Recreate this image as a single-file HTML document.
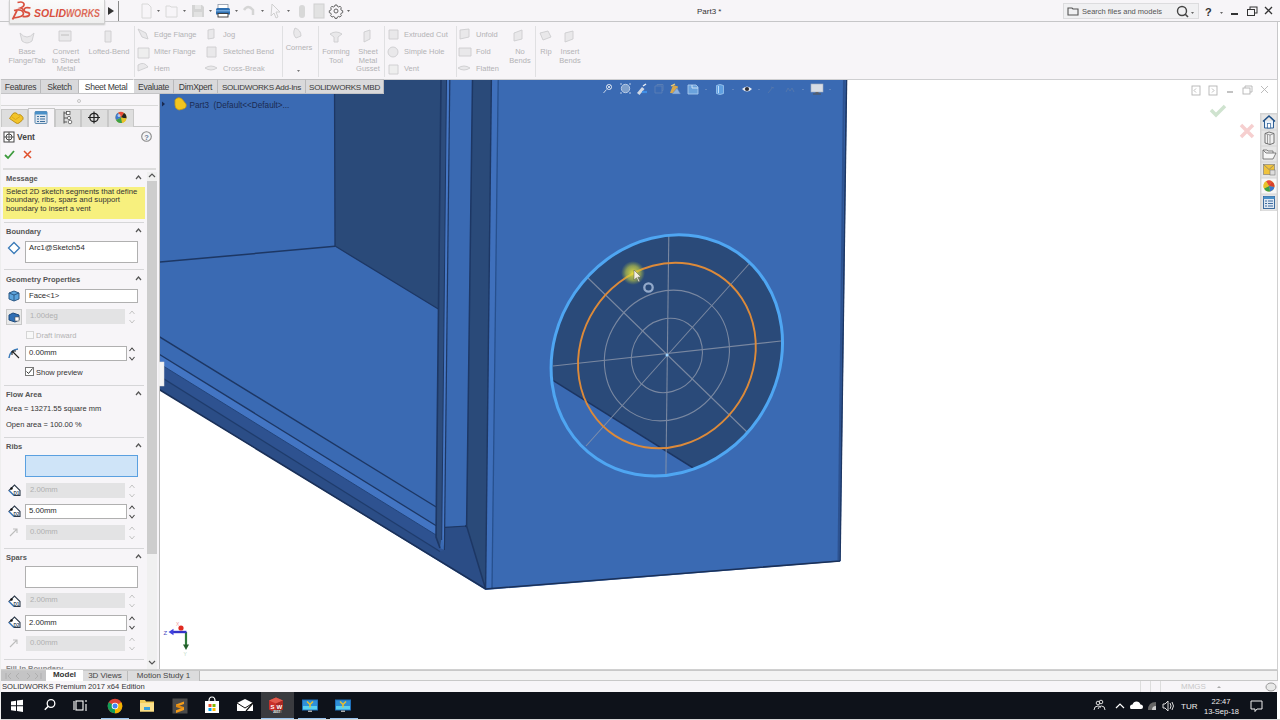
<!DOCTYPE html>
<html><head><meta charset="utf-8">
<style>
*{box-sizing:border-box;margin:0;padding:0}
html,body{width:1280px;height:720px;overflow:hidden;background:#fff;font-family:"Liberation Sans",sans-serif;color:#222}
.a{position:absolute}
#title{left:0;top:0;width:1280px;height:22px;background:#f7f5f8;border-bottom:1px solid #c6c6c8}
#ribbon{left:0;top:22px;width:1278px;height:58px;background:#f7f5f8;border-bottom:1px solid #cfcfd1;border-right:1px solid #c8c8ca}
.rt{position:absolute;font-size:7.5px;color:#b9b9bb;white-space:nowrap;line-height:8.5px;text-align:center}
.rl{position:absolute;font-size:7.5px;color:#b9b9bb;white-space:nowrap;line-height:9px}
.sep{position:absolute;top:26px;width:1px;height:50px;background:#e2e2e4}
#tabs{left:1px;top:79px;width:383px;height:15px;background:#d6d6d8;border-bottom:1px solid #c4c4c6}
.tab{position:absolute;top:0;height:14px;font-size:8.6px;line-height:15px;text-align:center;color:#3a3a3a;letter-spacing:-0.3px;border-right:1px solid #b9b9bb;border-top:1px solid #c0c0c2;background:#d9d9db}
#panel{left:0;top:94px;width:160px;height:576px;background:#f7f5f8;border-right:1px solid #bdbdbd}
.ph{position:absolute;left:6px;font-size:7.5px;color:#555;font-weight:bold;}
.pt{position:absolute;font-size:7.5px;color:#222;white-space:nowrap}
.box{position:absolute;background:#fff;border:1px solid #b0b0b0;font-size:7.7px;padding-left:3px;line-height:12px;color:#2a2a2a}
.dis{background:#e3e3e4;border-color:#e3e3e4;color:#b0b0b0}
.psep{position:absolute;left:4px;width:140px;height:1px;background:#d6d6d8}
.car{position:absolute;left:135px;width:7px;height:7px}
#gfx{left:160px;top:80px;width:1120px;height:590px;background:#fff}
#btabs{left:0;top:669px;width:1280px;height:12px;background:#fff;border-top:1px solid #d0d0d0}
#status{left:0;top:681px;width:1280px;height:11px;background:#f7f5f8}
#task{left:0;top:692px;width:1277px;height:27px;background:#0e121a}
</style></head><body>

<!-- TITLE BAR -->
<div id="title" class="a"></div>
<div class="a" style="left:9px;top:0;width:96px;height:24px;z-index:5;background:linear-gradient(#fbfbfb,#eeeeee);border:1px solid #d0d0d0;border-top:none;box-shadow:0 1px 1.5px #c4c4c4"></div>
<svg class="a" style="left:0;top:0;z-index:6" width="105" height="22" viewBox="0 0 105 22">
  <path d="M17.5 2.5 q5.5 -1.5 6.5 1.5 q0.5 2.5 -3.5 4 q3 0.5 2.5 3" fill="none" stroke="#d9503f" stroke-width="1.7"/>
  <path d="M12.5 19.5 l5 -10 M14 10.5 q9 -2 9.5 3 q0 3.5 -10 4.5" fill="none" stroke="#d9503f" stroke-width="1.7"/>
  <path d="M30.5 8 q-6 -1.5 -6.5 2 q0 2 3.5 2.5 q3 0.7 1.5 3 q-1.5 1.5 -6.5 0.8" fill="none" stroke="#d9503f" stroke-width="1.8"/>
  <text x="34" y="17.3" font-family="Liberation Sans" font-weight="bold" font-style="italic" font-size="11" fill="#d9503f" textLength="32" lengthAdjust="spacingAndGlyphs">SOLID</text>
  <text x="66" y="17.3" font-family="Liberation Sans" font-weight="bold" font-style="italic" font-size="11" fill="#dd6a58" textLength="34" lengthAdjust="spacingAndGlyphs">WORKS</text>
</svg>
<div class="a" style="left:108px;top:7px;width:0;height:0;border-left:6px solid #333;border-top:4.5px solid transparent;border-bottom:4.5px solid transparent"></div>
<div class="a" style="left:118px;top:1px;width:1px;height:20px;background:#8a8a8a"></div>
<svg class="a" style="left:130px;top:0" width="240" height="22" viewBox="130 0 240 22">
  <g fill="none" stroke="#d8d8d8" stroke-width="1">
    <path d="M142 4 h6 l3 3 v11 h-9z"/>
    <path d="M166 6 h4 l1 1 h6 v10 h-11z"/>
  </g>
  <path d="M192 5h10l2 2v10h-12z" fill="#d4d4d4"/><rect x="195" y="5" width="6" height="4" fill="#e6e6e6"/><rect x="194" y="12" width="8" height="5" fill="#e2e2e2"/>
  <rect x="218" y="4.5" width="10" height="4" fill="#fff" stroke="#8a96a6" stroke-width="0.8"/>
  <path d="M216 9.5 q0 -1.5 1.5 -1.5 h11 q1.5 0 1.5 1.5 v5 h-14z" fill="#2f6fb0"/>
  <rect x="216" y="10" width="14" height="1.5" fill="#6fa6dc"/>
  <rect x="218" y="13.5" width="10" height="3.5" fill="#fff" stroke="#333" stroke-width="0.9"/>
  <path d="M244 10 q4 -6 9 0 v5" fill="none" stroke="#d5d5d5" stroke-width="2.5"/>
  <path d="M272 4 l8 8 h-4 l2 5 l-2 1 l-2 -5 l-3 3z" fill="none" stroke="#d0d0d0"/>
  <rect x="299" y="5" width="6" height="13" rx="3" fill="#d8d8d8"/>
  <rect x="314" y="4" width="10" height="14" fill="#e2e2e2" stroke="#d0d0d0"/>
  <path d="M335 5 h2 l0.4 1.4 l1.3 0.6 l1.3 -0.7 l1.4 1.4 l-0.7 1.3 l0.6 1.3 l1.4 0.4 v2 l-1.4 0.4 l-0.6 1.3 l0.7 1.3 l-1.4 1.4 l-1.3 -0.7 l-1.3 0.6 l-0.4 1.4 h-2 l-0.4 -1.4 l-1.3 -0.6 l-1.3 0.7 l-1.4 -1.4 l0.7 -1.3 l-0.6 -1.3 l-1.4 -0.4 v-2 l1.4 -0.4 l0.6 -1.3 l-0.7 -1.3 l1.4 -1.4 l1.3 0.7 l1.3 -0.6z" fill="none" stroke="#555" stroke-width="0.9"/>
  <circle cx="336" cy="11" r="2" fill="none" stroke="#555" stroke-width="0.9"/>
  <g fill="#666"><path d="M157 10h3l-1.5 2z"/><path d="M183 10h3l-1.5 2z"/><path d="M209 10h3l-1.5 2z"/><path d="M235 10h3l-1.5 2z"/><path d="M261 10h3l-1.5 2z"/><path d="M287 10h3l-1.5 2z"/><path d="M347 10h3l-1.5 2z"/></g>
</svg>
<div class="a" style="left:697px;top:7px;font-size:8px;color:#333">Part3 *</div>
<div class="a" style="left:1063px;top:3px;width:136px;height:16px;background:#f0f0f2;border:1px solid #dcdcde"></div>
<svg class="a" style="left:1066px;top:5px" width="14" height="12"><path d="M2 3 h4 l1 1 h5 v6 h-10z" fill="none" stroke="#555" stroke-width="1.1"/></svg>
<div class="a" style="left:1082px;top:7px;font-size:7.5px;color:#555">Search files and models</div>
<svg class="a" style="left:1172px;top:3px" width="60" height="18">
  <circle cx="10" cy="8" r="4.5" fill="none" stroke="#444" stroke-width="1.4"/><line x1="13" y1="11" x2="16" y2="14" stroke="#444" stroke-width="1.6"/>
  <path d="M19 9h3l-1.5 2z" fill="#666"/>
  <text x="33" y="13" font-family="Liberation Sans" font-weight="bold" font-size="11" fill="#333">?</text>
  <path d="M48 9h3l-1.5 2z" fill="#666"/>
</svg>
<svg class="a" style="left:1228px;top:3px" width="52" height="18">
  <rect x="3" y="10" width="7" height="2" fill="#333"/>
  <rect x="22" y="4" width="7" height="6" fill="none" stroke="#333"/><rect x="19.5" y="6.5" width="7" height="6" fill="#f6f5f7" stroke="#333"/>
  <path d="M37 4 l7 7 M44 4 l-7 7" stroke="#333" stroke-width="1.3"/>
</svg>

<!-- RIBBON -->
<div id="ribbon" class="a"></div>
<svg class="a" style="left:0;top:22px" width="600" height="58" viewBox="0 22 600 58">
  <g fill="#e9e8ea" stroke="#cdcdcf" stroke-width="0.9">
    <path d="M20 33 q7 8 14 0 l-2 8 q-5 4 -10 0z"/>
    <path d="M59 31 h12 v10 h-12z"/><path d="M61 35 h8" stroke="#bbb"/>
    <path d="M105 31 h6 v11 h-6z"/>
    <path d="M138 29 l8 4 l2 6 l-6 -2z"/>
    <path d="M138 48 h11 v10 h-11z" fill="#eee"/>
    <path d="M138 65 q6 -4 10 2 l-10 4z"/>
    <path d="M208 30 l6 -1 v9 l-6 1z"/>
    <path d="M207 47 h9 v10 h-9z"/>
    <path d="M205 68 q6 -4 12 0 q-6 4 -12 0z"/>
    <path d="M295 28 q6 2 6 8 l-5 2 q-4 -4 -1 -10z"/>
    <path d="M330 34 q6 -4 12 0 l-4 3 v5 h-4 v-5z"/>
    <path d="M364 32 l6 -2 v9 l-6 3z"/>
    <path d="M389 30 h9 v9 h-9z"/>
    <circle cx="393" cy="52" r="5"/>
    <path d="M389 65 h9 v9 h-9z" fill="#eee"/>
    <path d="M460 30 l9 -1 v8 l-9 2z"/>
    <path d="M459 48 h12 v8 h-12z"/>
    <path d="M458 68 q6 -4 12 0 q-6 4 -12 0z"/>
    <path d="M514 33 l8 -3 v9 l-8 2z"/>
    <path d="M540 33 l8 -2 l3 6 l-8 3z"/>
    <path d="M565 33 l8 -2 v8 l-8 3z"/>
  </g>
  <g font-family="Liberation Sans" font-size="7.5" fill="#b3b3b5">
    <text x="27" y="54" text-anchor="middle">Base</text>
    <text x="27" y="62.5" text-anchor="middle">Flange/Tab</text>
    <text x="66" y="54" text-anchor="middle">Convert</text>
    <text x="66" y="62.5" text-anchor="middle">to Sheet</text>
    <text x="66" y="71" text-anchor="middle">Metal</text>
    <text x="109" y="54" text-anchor="middle">Lofted-Bend</text>
    <text x="154" y="37">Edge Flange</text>
    <text x="154" y="54">Miter Flange</text>
    <text x="154" y="71">Hem</text>
    <text x="223" y="37">Jog</text>
    <text x="223" y="54">Sketched Bend</text>
    <text x="223" y="71">Cross-Break</text>
    <text x="299" y="50" text-anchor="middle">Corners</text>
    <text x="336" y="54" text-anchor="middle">Forming</text>
    <text x="336" y="62.5" text-anchor="middle">Tool</text>
    <text x="368" y="54" text-anchor="middle">Sheet</text>
    <text x="368" y="62.5" text-anchor="middle">Metal</text>
    <text x="368" y="71" text-anchor="middle">Gusset</text>
    <text x="404" y="37">Extruded Cut</text>
    <text x="404" y="54">Simple Hole</text>
    <text x="404" y="71">Vent</text>
    <text x="476" y="37">Unfold</text>
    <text x="476" y="54">Fold</text>
    <text x="476" y="71">Flatten</text>
    <text x="520" y="54" text-anchor="middle">No</text>
    <text x="520" y="62.5" text-anchor="middle">Bends</text>
    <text x="546" y="54" text-anchor="middle">Rip</text>
    <text x="570" y="54" text-anchor="middle">Insert</text>
    <text x="570" y="62.5" text-anchor="middle">Bends</text>
  </g>
  <path d="M297 70h3l-1.5 2z" fill="#777"/>
  <g fill="#e0e0e2">
    <rect x="134" y="26" width="1" height="51"/>
    <rect x="282" y="26" width="1" height="51"/>
    <rect x="318" y="26" width="1" height="51"/>
    <rect x="384" y="26" width="1" height="51"/>
    <rect x="456" y="26" width="1" height="51"/>
    <rect x="535" y="26" width="1" height="51"/>
  </g>
</svg>

<!-- PANEL -->
<div id="panel" class="a"></div>
<div class="a" style="left:77px;top:99px;width:4px;height:4px;border-radius:2px;border:1px solid #c4c4c4"></div>
<div class="a" style="left:0;top:105px;width:158px;height:1px;background:#d9d9d9"></div>
<!-- icon tabs -->
<div class="a" style="left:0;top:108px;width:160px;height:19px;border-bottom:1px solid #c8c8c8"></div>
<div class="a" style="left:1px;top:109px;width:27px;height:18px;background:#dedede;border:1px solid #c8c8c8;border-bottom:none"></div>
<div class="a" style="left:28px;top:108px;width:27px;height:19px;background:#f7f5f8;border:1px solid #c8c8c8;border-bottom:none"></div>
<div class="a" style="left:55px;top:109px;width:26px;height:18px;background:#dedede;border:1px solid #c8c8c8;border-bottom:none"></div>
<div class="a" style="left:81px;top:109px;width:27px;height:18px;background:#dedede;border:1px solid #c8c8c8;border-bottom:none"></div>
<div class="a" style="left:108px;top:109px;width:26px;height:18px;background:#dedede;border:1px solid #c8c8c8;border-bottom:none"></div>
<svg class="a" style="left:0;top:108px" width="140" height="20" viewBox="0 108 140 20">
  <path d="M9.5 118.5 l3.5 -5 q2 -1.5 4 0 l1.5 1.5 q1.5 -1 3 0.5 l1.5 2 q0.5 2 -1 3 l-3 2.5 q-1.5 1 -3 0 z" fill="#f2c42a" stroke="#b88a12" stroke-width="0.9"/>
  <path d="M12 117 l3.5 2.5 l4.5 -3" fill="none" stroke="#d9a418" stroke-width="0.9"/>
  <rect x="35" y="111.5" width="12" height="12" rx="1" fill="#dfe6ee" stroke="#4e7fa8" stroke-width="0.9"/>
  <rect x="35" y="111.5" width="12" height="3" fill="#4a90c8"/>
  <path d="M37 116.5h2M40 116.5h5M37 119h2M40 119h5M37 121.5h2M40 121.5h5" stroke="#3d6f9e" stroke-width="1.1"/>
  <path d="M64 111.5 v12 M64 113 h3 M64 118 h3 M64 122 h3" fill="none" stroke="#555" stroke-width="1"/>
  <rect x="66.5" y="111.5" width="3.5" height="3" fill="#fff" stroke="#555" stroke-width="0.8"/><circle cx="69" cy="118" r="1.6" fill="#fff" stroke="#555" stroke-width="0.8"/><circle cx="70" cy="122" r="1.8" fill="#fff" stroke="#555" stroke-width="0.8"/>
  <circle cx="94" cy="117.5" r="4.2" fill="none" stroke="#222" stroke-width="1.3"/><path d="M94 111.5v12M88 117.5h12" stroke="#222" stroke-width="1.2"/>
  <circle cx="121" cy="117.5" r="5.5" fill="#e8c22c"/>
  <path d="M121 117.5 L118 112.8 A5.5 5.5 0 0 1 124 112.9z" fill="#e84a3a"/>
  <path d="M121 117.5 L124 112.9 A5.5 5.5 0 0 1 126.4 118.5z" fill="#222"/>
  <path d="M121 117.5 L126.4 118.5 A5.5 5.5 0 0 1 122 122.9z" fill="#e8c22c"/>
  <path d="M121 117.5 L122 122.9 A5.5 5.5 0 0 1 116 120z" fill="#3aa048"/>
  <path d="M121 117.5 L116 120 A5.5 5.5 0 0 1 118 112.8z" fill="#3c78d0"/>
  <circle cx="119" cy="115.5" r="1.5" fill="#fff" opacity="0.6"/>
</svg>
<!-- Vent title -->
<svg class="a" style="left:3px;top:131px" width="12" height="12"><rect x="1" y="1" width="10" height="10" fill="#fff" stroke="#444"/><circle cx="6" cy="6" r="3" fill="none" stroke="#444"/><path d="M6 1v10M1 6h10" stroke="#444" stroke-width="0.8"/></svg>
<div class="a" style="left:17px;top:132px;font-size:8.5px;font-weight:bold;color:#444">Vent</div>
<svg class="a" style="left:140px;top:130px" width="13" height="13"><circle cx="6.5" cy="6.5" r="4.8" fill="#f4f4f6" stroke="#8a8a8a" stroke-width="1.1"/><text x="6.5" y="9.6" text-anchor="middle" font-family="Liberation Sans" font-weight="bold" font-size="7.5" fill="#6b7f9a">?</text></svg>
<svg class="a" style="left:3px;top:149px" width="35" height="12"><path d="M2 6 l3 3 l6 -7" fill="none" stroke="#3d9b3d" stroke-width="1.8"/><path d="M21 2 l7 7 M28 2 l-7 7" stroke="#e0502c" stroke-width="1.5"/></svg>
<div class="psep" style="top:168px;left:3px;width:153px;height:2px;background:#dcdcdc"></div>
<!-- scrollbar -->
<div class="a" style="left:147px;top:172px;width:10px;height:497px;background:#f0f0f0"></div>
<div class="a" style="left:147px;top:181px;width:10px;height:373px;background:#cdcdcd"></div>
<svg class="a" style="left:147px;top:171px" width="10" height="8"><path d="M2 6 l3 -3 l3 3" fill="none" stroke="#555" stroke-width="1.2"/></svg>
<svg class="a" style="left:147px;top:659px" width="10" height="8"><path d="M2 2 l3 3 l3 -3" fill="none" stroke="#555" stroke-width="1.2"/></svg>
<!-- Message -->
<div class="ph" style="top:174px">Message</div>
<svg class="car" style="top:174px"><path d="M1 5 l2.5 -3 l2.5 3" fill="none" stroke="#555" stroke-width="1.2"/></svg>
<div class="a" style="left:3px;top:187px;width:142px;height:32px;background:#f7f07e"></div>
<div class="pt" style="left:6px;top:187.5px;line-height:8.6px;font-size:7.7px;color:#333">Select 2D sketch segments that define<br>boundary, ribs, spars and support<br>boundary to insert a vent</div>
<div class="psep" style="top:222px"></div>
<!-- Boundary -->
<div class="ph" style="top:227px">Boundary</div>
<svg class="car" style="top:227px"><path d="M1 5 l2.5 -3 l2.5 3" fill="none" stroke="#555" stroke-width="1.2"/></svg>
<svg class="a" style="left:7px;top:241px" width="14" height="14"><path d="M7 1.5 l5.5 5.5 l-5.5 5.5 l-5.5 -5.5z" fill="#fff" stroke="#3a7ab8" stroke-width="1.3"/></svg>
<div class="box" style="left:25px;top:241px;width:113px;height:22px;line-height:11px">Arc1@Sketch54</div>
<div class="psep" style="top:269px"></div>
<!-- Geometry Properties -->
<div class="ph" style="top:275px">Geometry Properties</div>
<svg class="car" style="top:275px"><path d="M1 5 l2.5 -3 l2.5 3" fill="none" stroke="#555" stroke-width="1.2"/></svg>
<svg class="a" style="left:7px;top:289px" width="14" height="14"><path d="M2 4 l5 -2 l5 2 v6 l-5 2 l-5 -2z" fill="#5ba3dc" stroke="#2d5a86"/><path d="M2 4 l5 2 l5 -2 M7 6 v6" fill="none" stroke="#2d5a86"/></svg>
<div class="box" style="left:25px;top:289px;width:113px;height:14px">Face&lt;1&gt;</div>
<div class="a" style="left:6px;top:309px;width:16px;height:16px;border:1px solid #c8c8c8;background:#e9e9e9"></div>
<svg class="a" style="left:7px;top:310px" width="14" height="14"><path d="M2 5 l4 -2 l6 2 v5 l-4 2 l-6 -2z" fill="#2f6fb5" stroke="#1e4b7e"/><rect x="8" y="7" width="4" height="4" fill="#fff" stroke="#555" stroke-width="0.6"/></svg>
<div class="box dis" style="left:26px;top:309px;width:99px;height:15px;line-height:12px">1.00deg</div>
<svg class="a" style="left:128px;top:309px" width="8" height="16"><path d="M1.5 5 l2.5 -3 l2.5 3 M1.5 11 l2.5 3 l2.5 -3" fill="none" stroke="#c5c5c5" stroke-width="1"/></svg>
<div class="a" style="left:26px;top:331px;width:8px;height:8px;border:1px solid #d5d5d5;background:#f8f8f8"></div>
<div class="pt" style="left:36px;top:331px;color:#b3b3b3">Draft inward</div>
<svg class="a" style="left:7px;top:346px" width="14" height="14"><path d="M2 12 q1 -8 9 -9" fill="none" stroke="#3a7ab8" stroke-width="1.5"/><path d="M5 5 l7 7 M5 5 v4 M5 5 h4" fill="none" stroke="#222" stroke-width="1.1"/></svg>
<div class="box" style="left:25px;top:346px;width:102px;height:15px;line-height:12px">0.00mm</div>
<svg class="a" style="left:128px;top:346px" width="8" height="16"><path d="M1.5 5 l2.5 -3 l2.5 3 M1.5 11 l2.5 3 l2.5 -3" fill="none" stroke="#444" stroke-width="1.1"/></svg>
<div class="a" style="left:25px;top:367px;width:9px;height:9px;border:1px solid #777;background:#fff"></div>
<svg class="a" style="left:25px;top:367px" width="9" height="9"><path d="M1.5 4.5 l2 2 l4 -5" fill="none" stroke="#333" stroke-width="1"/></svg>
<div class="pt" style="left:36px;top:368px;color:#333">Show preview</div>
<div class="psep" style="top:385px"></div>
<!-- Flow Area -->
<div class="ph" style="top:390px">Flow Area</div>
<svg class="car" style="top:390px"><path d="M1 5 l2.5 -3 l2.5 3" fill="none" stroke="#555" stroke-width="1.2"/></svg>
<div class="pt" style="left:6px;top:404px;color:#333">Area = 13271.55 square mm</div>
<div class="pt" style="left:6px;top:420px;color:#333">Open area = 100.00 %</div>
<div class="psep" style="top:437px"></div>
<!-- Ribs -->
<div class="ph" style="top:442px">Ribs</div>
<svg class="car" style="top:442px"><path d="M1 5 l2.5 -3 l2.5 3" fill="none" stroke="#555" stroke-width="1.2"/></svg>
<div class="box" style="left:25px;top:455px;width:113px;height:22px;background:#cfe4f8;border:1.5px solid #5aa0e0"></div>
<svg class="a" style="left:7px;top:483px" width="14" height="14"><path d="M2 7.5 l5.5 -5.5 l5.5 5.5 v5 h-6z" fill="#fff" stroke="#2d3a4a" stroke-width="1.1"/><path d="M2 7.5 l5 5" stroke="#4a8ad0" stroke-width="1.2"/><circle cx="4.5" cy="5.5" r="1.2" fill="#111"/><text x="6.5" y="12" font-family="Liberation Sans" font-weight="bold" font-size="4.6" fill="#3a4a5a">D1</text></svg>
<div class="box dis" style="left:26px;top:483px;width:99px;height:15px;line-height:12px">2.00mm</div>
<svg class="a" style="left:128px;top:483px" width="8" height="16"><path d="M1.5 5 l2.5 -3 l2.5 3 M1.5 11 l2.5 3 l2.5 -3" fill="none" stroke="#c5c5c5" stroke-width="1"/></svg>
<svg class="a" style="left:7px;top:504px" width="14" height="14"><path d="M2 7.5 l5.5 -5.5 l5.5 5.5 v5 h-6z" fill="#fff" stroke="#2d3a4a" stroke-width="1.1"/><path d="M2 7.5 l5 5" stroke="#4a8ad0" stroke-width="1.2"/><circle cx="4.5" cy="5.5" r="1.2" fill="#111"/><text x="6.5" y="12" font-family="Liberation Sans" font-weight="bold" font-size="4.6" fill="#3a4a5a">D2</text></svg>
<div class="box" style="left:25px;top:504px;width:102px;height:15px;line-height:12px">5.00mm</div>
<svg class="a" style="left:128px;top:504px" width="8" height="16"><path d="M1.5 5 l2.5 -3 l2.5 3 M1.5 11 l2.5 3 l2.5 -3" fill="none" stroke="#444" stroke-width="1.1"/></svg>
<svg class="a" style="left:7px;top:525px" width="14" height="14"><path d="M3 11 l7 -7 M6 4 h4 v4" fill="none" stroke="#bdbdbd" stroke-width="1.1"/></svg>
<div class="box dis" style="left:26px;top:525px;width:99px;height:15px;line-height:12px">0.00mm</div>
<svg class="a" style="left:128px;top:525px" width="8" height="16"><path d="M1.5 5 l2.5 -3 l2.5 3 M1.5 11 l2.5 3 l2.5 -3" fill="none" stroke="#c5c5c5" stroke-width="1"/></svg>
<div class="psep" style="top:548px"></div>
<!-- Spars -->
<div class="ph" style="top:553px">Spars</div>
<svg class="car" style="top:553px"><path d="M1 5 l2.5 -3 l2.5 3" fill="none" stroke="#555" stroke-width="1.2"/></svg>
<div class="box" style="left:25px;top:566px;width:113px;height:22px"></div>
<svg class="a" style="left:7px;top:594px" width="14" height="14"><path d="M2 7.5 l5.5 -5.5 l5.5 5.5 v5 h-6z" fill="#fff" stroke="#2d3a4a" stroke-width="1.1"/><path d="M2 7.5 l5 5" stroke="#4a8ad0" stroke-width="1.2"/><circle cx="4.5" cy="5.5" r="1.2" fill="#111"/><text x="6.5" y="12" font-family="Liberation Sans" font-weight="bold" font-size="4.6" fill="#3a4a5a">D1</text></svg>
<div class="box dis" style="left:26px;top:593px;width:99px;height:15px;line-height:12px">2.00mm</div>
<svg class="a" style="left:128px;top:593px" width="8" height="16"><path d="M1.5 5 l2.5 -3 l2.5 3 M1.5 11 l2.5 3 l2.5 -3" fill="none" stroke="#c5c5c5" stroke-width="1"/></svg>
<svg class="a" style="left:7px;top:615px" width="14" height="14"><path d="M2 7.5 l5.5 -5.5 l5.5 5.5 v5 h-6z" fill="#fff" stroke="#2d3a4a" stroke-width="1.1"/><path d="M2 7.5 l5 5" stroke="#4a8ad0" stroke-width="1.2"/><circle cx="4.5" cy="5.5" r="1.2" fill="#111"/><text x="6.5" y="12" font-family="Liberation Sans" font-weight="bold" font-size="4.6" fill="#3a4a5a">D2</text></svg>
<div class="box" style="left:25px;top:615px;width:102px;height:16px;line-height:13px">2.00mm</div>
<svg class="a" style="left:128px;top:615px" width="8" height="16"><path d="M1.5 5 l2.5 -3 l2.5 3 M1.5 11 l2.5 3 l2.5 -3" fill="none" stroke="#444" stroke-width="1.1"/></svg>
<svg class="a" style="left:7px;top:636px" width="14" height="14"><path d="M3 11 l7 -7 M6 4 h4 v4" fill="none" stroke="#bdbdbd" stroke-width="1.1"/></svg>
<div class="box dis" style="left:26px;top:636px;width:99px;height:15px;line-height:12px">0.00mm</div>
<svg class="a" style="left:128px;top:636px" width="8" height="16"><path d="M1.5 5 l2.5 -3 l2.5 3 M1.5 11 l2.5 3 l2.5 -3" fill="none" stroke="#c5c5c5" stroke-width="1"/></svg>
<div class="psep" style="top:659px"></div>
<div class="ph" style="top:664px;color:#888">Fill-In Boundary</div>

<!-- GRAPHICS -->
<div id="gfx" class="a"></div>
<svg class="a" style="left:0;top:0" width="1280" height="720" viewBox="0 0 1280 720">
  <defs><clipPath id="gc"><rect x="160" y="80" width="1120" height="589"/></clipPath></defs>
  <g clip-path="url(#gc)">
    <polygon points="150,80 847,80 840.5,561.5 485.6,590 150,383.9" fill="#3a6ab3"/>
    <!-- back floor line -->
    <polyline points="150,263 335,246.3" fill="none" stroke="#1d3764" stroke-width="1.5"/>
    <!-- dark side wall -->
    <polygon points="334.5,80 441,80 438.3,309 335,246" fill="#2a4a79"/>
    <polyline points="334.5,80 335,246 438.3,309" fill="none" stroke="#1d3764" stroke-width="1.3"/>
    <!-- lip band -->
    <polygon points="150,357.8 440,537.5 444,550 445,527.4 466.6,526 485.6,589 150,383.9" fill="#2e5290"/>
    <polygon points="150,370.2 440,551.5 444,550 445,527.4 466.6,526 485.6,589 150,383.9" fill="#2b4d86"/>
    <linearGradient id="lg1" x1="0" y1="0" x2="0.35" y2="-1"><stop offset="0" stop-color="#3a6ab3"/><stop offset="1" stop-color="#4a7cc8"/></linearGradient><polygon points="150,348.5 440,528 440,537.5 150,357.8" fill="#4375c3"/>
    <polyline points="150,330.9 437,507.5" fill="none" stroke="#1d3764" stroke-width="1.4"/>
    <polyline points="150,348.5 437,526.2" fill="none" stroke="#1d3764" stroke-width="1.3"/>
    <polyline points="150,357.8 437,535.6" fill="none" stroke="#23447a" stroke-width="1"/>
    <polyline points="150,370.2 440,551.5" fill="none" stroke="#1f3c6c" stroke-width="1.2"/>
    <!-- post -->
    <polygon points="441.0,80 449.5,80 444.4,550 440,548 436,537" fill="#3a6ab3"/>
    <polygon points="441.0,80 446.5,80 441.7,536 440,548 436,537" fill="#2d4c7c"/>
    <polygon points="446.5,80 449.5,80 444.4,550 441.7,536" fill="#4677c4"/>
    <polyline points="441.0,80 436,537 440,548" fill="none" stroke="#1d3764" stroke-width="1.6"/>
    <polyline points="446.5,80 441.7,540" fill="none" stroke="#1d3764" stroke-width="1"/>
    <polyline points="449.8,80 444.4,550" fill="none" stroke="#1d3764" stroke-width="1.2"/>
    <line x1="445" y1="527.4" x2="466.6" y2="526" stroke="#1d3764" stroke-width="1.2"/>
    <circle cx="466.6" cy="526" r="1.3" fill="#152a50"/>
    <!-- dark strip -->
    <polygon points="472.5,80 491.4,80 485.6,589 466.6,526" fill="#2a4a79"/>
    <polyline points="472.5,80 466.6,526 485.6,589" fill="none" stroke="#1d3764" stroke-width="1.5"/>
    <polygon points="491.4,80 498.0,80 491.8,589 485.6,589" fill="#3f70bc"/>
    <polyline points="491.4,80 485.6,589" fill="none" stroke="#1d3764" stroke-width="1.4"/>
    <polyline points="498.2,80 492,589" fill="none" stroke="#27508e" stroke-width="1.3"/>
    <!-- bottom outline -->
    <polyline points="150,383.9 485.6,589 840,561" fill="none" stroke="#1a3058" stroke-width="1.6"/>
    <!-- outline right -->
    <polyline points="846.5,80 840,561" fill="none" stroke="#1d3764" stroke-width="1.6"/>
    <line x1="844" y1="80" x2="838.5" y2="560" stroke="#2d5290" stroke-width="2"/>
    <!-- vent -->
    <clipPath id="ec"><ellipse cx="666.8" cy="355.4" rx="111.3" ry="124.7" transform="rotate(34.25 666.8 355.4)"/></clipPath>
    <ellipse cx="666.8" cy="355.4" rx="111.3" ry="124.7" transform="rotate(34.25 666.8 355.4)" fill="#2a4a79"/>
    <polygon clip-path="url(#ec)" points="530,366 706,476 530,520" fill="#3a6ab3"/>
    <line clip-path="url(#ec)" x1="530" y1="366" x2="706" y2="476" stroke="#1c3562" stroke-width="1.5"/>
    <g stroke="#8d97ab" stroke-width="1.1" fill="none" opacity="0.8">
      <line x1="668.8" y1="236" x2="665.9" y2="475"/>
      <line x1="553" y1="366" x2="781" y2="341"/>
      <line x1="588" y1="278" x2="747" y2="432"/>
      <line x1="749" y1="264" x2="586" y2="446"/>
      <ellipse cx="666.9" cy="355.5" rx="60.4" ry="67.2" transform="rotate(33 666.9 355.5)"/>
      <ellipse cx="666.9" cy="355.5" rx="34.4" ry="38.2" transform="rotate(33 666.9 355.5)"/>
    </g>
    <ellipse cx="666.9" cy="355.5" rx="85.95" ry="95.54" transform="rotate(33 666.9 355.5)" fill="none" stroke="#dc8a3a" stroke-width="1.9"/>
    <ellipse cx="666.8" cy="355.4" rx="111.3" ry="124.7" transform="rotate(34.25 666.8 355.4)" fill="none" stroke="#4fa6f2" stroke-width="3"/>
    <circle cx="667" cy="355" r="1.5" fill="#9fd4ff"/>
    <radialGradient id="glow"><stop offset="0" stop-color="#e8e040" stop-opacity="0.95"/><stop offset="0.6" stop-color="#c8d040" stop-opacity="0.6"/><stop offset="1" stop-color="#a0b840" stop-opacity="0"/></radialGradient>
    <circle cx="633" cy="273" r="12" fill="url(#glow)"/>
    <path d="M634 270 l0 10 l2.5 -2.2 l2 4 l1.3 -0.6 l-2 -4 l3.2 -0.2z" fill="#f4f0e0" stroke="#555" stroke-width="0.5"/>
    <circle cx="648.5" cy="287.5" r="4.2" fill="none" stroke="#93a9ca" stroke-width="2.3"/>
  </g>
  </g>
</svg>

<!-- TABS -->
<div id="tabs" class="a">
  <div class="tab" style="left:0;width:40px">Features</div>
  <div class="tab" style="left:40px;width:38px">Sketch</div>
  <div class="tab" style="left:78px;width:55px;background:#fff;border-right-color:#fff">Sheet Metal</div>
  <div class="tab" style="left:133px;width:40px">Evaluate</div>
  <div class="tab" style="left:173px;width:44px">DimXpert</div>
  <div class="tab" style="left:217px;width:88px;font-size:8.1px">SOLIDWORKS Add-Ins</div>
  <div class="tab" style="left:305px;width:78px;font-size:8.1px">SOLIDWORKS MBD</div>
</div>

<!-- GFX OVERLAYS -->
<svg class="a" style="left:0;top:0" width="1280" height="720" viewBox="0 0 1280 720">
  <path d="M162 101.5l3 2.5l-3 2.5z" fill="#1a2a50"/>
  <path d="M175 100q3-4 7-1l4 5q1 4-3 5l-4 1q-4-1-4-5z" fill="#f2c51e" stroke="#c79a10" stroke-width="0.8"/>
  <text x="189.5" y="107.5" font-family="Liberation Sans" font-size="8.2" fill="#1b2b52">Part3&#160;&#160;(Default&lt;&lt;Default&gt;...</text>
  <!-- heads-up toolbar -->
  <g>
    <g stroke="#c5d3e8" stroke-width="1" fill="none"><path d="M607 85l4 4M611 85l-4 4"/><circle cx="609" cy="87" r="2.6"/><path d="M606.5 89.5l-3 3.5"/></g>
    <circle cx="625.5" cy="88.5" r="4.2" fill="#7fa0cc" stroke="#b8cbe6" stroke-width="1"/><path d="M620 84h2M629 84h2M620 93h2M629 93h2" stroke="#b8cbe6"/>
    <path d="M637 93l5-6l2.5 2l-5 6z" fill="#d0d8e4"/><path d="M643 86l3-2" stroke="#e8eef6" stroke-width="1.5"/><path d="M642 92h5" stroke="#3f8ee6" stroke-width="2.2"/>
    <path d="M655 86h7v7h-7z M657 86v-1.5h6v6h-1" fill="none" stroke="#5b80b6" stroke-width="0.9"/>
    <path d="M670 93l3-8l5 1.5l-2 7z" fill="#d9a84a"/><path d="M672 94l5-6l3.5 6z" fill="#8fb3e0" stroke="#5a7fb8" stroke-width="0.5"/><path d="M671 86l4-2" stroke="#f2d27a" stroke-width="1.2"/>
    <path d="M688 85h8l2 2v7h-10z" fill="#6aa2dc" stroke="#a7c8ec" stroke-width="0.9"/><path d="M692 85v3h6" fill="none" stroke="#d6e6f6" stroke-width="0.9"/>
    <path d="M716.5 85.5q3.5-2 7 0v8q-3.5 2-7 0z" fill="#5f9fe0" stroke="#9ec6ee" stroke-width="0.8"/><path d="M718.5 86v7" stroke="#bfe0ff" stroke-width="1"/>
    <path d="M742 89q5-5 10 0q-5 5-10 0z" fill="#e6ebf3"/><circle cx="747" cy="89" r="2.1" fill="#2d2f38"/>
    <path d="M768 93l5-6M771 87l3 1" stroke="#5276ad" stroke-width="1" fill="none"/>
    <path d="M786 92l2-4l2 3l2-3l2 4" fill="none" stroke="#5276ad" stroke-width="1"/>
    <rect x="811" y="84" width="12" height="8" fill="#d8dde5" stroke="#a5b0c0" stroke-width="0.6"/><rect x="815.5" y="92" width="3" height="1.5" fill="#666"/><rect x="813" y="93.5" width="8" height="1" fill="#555"/>
    <g fill="#5f84bd"><rect x="705" y="89" width="2" height="1"/><rect x="732" y="89" width="2" height="1"/><rect x="758" y="89" width="2" height="1"/><rect x="802" y="89" width="2" height="1"/><rect x="829" y="89" width="2" height="1"/></g>
  </g>
  <!-- doc window controls -->
  <g fill="none" stroke="#b4b4b4" stroke-width="0.9">
    <rect x="1192" y="86" width="8" height="9"/><path d="M1196 88.5l-2 2l2 2"/>
    <rect x="1209" y="86" width="8" height="9"/><path d="M1212 88.5l2 2l-2 2"/>
    <path d="M1227 92h6" stroke-width="1.6"/>
    <rect x="1243" y="88" width="7" height="6"/><path d="M1245 88v-2h7v6h-2"/>
    <path d="M1261 86l7 7M1268 86l-7 7"/>
  </g>
  <!-- faint ok/cancel -->
  <path d="M1211 110l5 5l9-9" fill="none" stroke="#cfe3cf" stroke-width="3.5"/>
  <path d="M1241 125l12 12M1253 125l-12 12" stroke="#f6cfcf" stroke-width="3.5"/>
  <!-- task pane -->
  <rect x="1260" y="113" width="17" height="98" fill="#d4d4d4"/>
  <rect x="1277" y="80" width="1" height="590" fill="#d0d0d0"/>
  <g>
    <rect x="1261.5" y="114.5" width="15" height="15" fill="#e6e6e6"/>
    <path d="M1263 121.5l6-5.5l6 5.5" fill="none" stroke="#1e4f86" stroke-width="1.6"/>
    <path d="M1264.5 121v7h9v-7" fill="#eaf2fb" stroke="#2d5f96" stroke-width="1"/><rect x="1267.5" y="123.5" width="3" height="4.5" fill="#fff" stroke="#2d5f96" stroke-width="0.7"/>
    <rect x="1261.5" y="130.5" width="15" height="15" fill="#e6e6e6"/>
    <path d="M1265 133.5l4-1.5l5 1.5v9.5l-4 1.5l-5-1.5z" fill="#efefef" stroke="#555" stroke-width="0.8"/><path d="M1265 133.5l5 1.5l4-1.5M1270 135v9.5M1267.5 134.5v9.5" fill="none" stroke="#666" stroke-width="0.6"/>
    <rect x="1261.5" y="146.5" width="15" height="15" fill="#e6e6e6"/>
    <path d="M1263 150h4l1 1h5v2" fill="#f4f4f4" stroke="#666" stroke-width="0.8"/><path d="M1263 150v9h10l3-6h-10z" fill="#f6f6f6" stroke="#666" stroke-width="0.8"/>
    <rect x="1261.5" y="162.5" width="15" height="15" fill="#e6e6e6"/>
    <rect x="1263.5" y="164.5" width="11" height="10" fill="#f0c33c" stroke="#777" stroke-width="0.6"/><path d="M1263.5 164.5l5.5 5l5.5-5" fill="none" stroke="#777" stroke-width="0.7"/><rect x="1270" y="170" width="5" height="5" fill="#ddd" stroke="#666" stroke-width="0.5"/>
    <rect x="1261.5" y="178.5" width="15" height="15" fill="#f7f7f7"/>
    <circle cx="1269" cy="186" r="5.5" fill="#e8c22c"/><path d="M1269 186L1266 181.3A5.5 5.5 0 0 1 1272 181.4z" fill="#e84a3a"/><path d="M1269 186L1272 181.4A5.5 5.5 0 0 1 1274.4 187z" fill="#d84030"/><path d="M1269 186L1274.4 187A5.5 5.5 0 0 1 1270 191.4z" fill="#3c78d0"/><path d="M1269 186L1270 191.4A5.5 5.5 0 0 1 1264 188.5z" fill="#3aa048"/><path d="M1269 186L1264 188.5A5.5 5.5 0 0 1 1266 181.3z" fill="#e8c22c"/>
    <rect x="1261.5" y="194.5" width="15" height="16" fill="#e6e6e6"/>
    <rect x="1263.5" y="196.5" width="11" height="12" fill="#dfe8f2" stroke="#2d5f96" stroke-width="0.9"/><rect x="1263.5" y="196.5" width="11" height="2.5" fill="#4a90c8"/><path d="M1265 201h2M1268 201h5M1265 203.5h2M1268 203.5h5M1265 206h2M1268 206h5" stroke="#2d5f96" stroke-width="0.9"/>
  </g>
  <!-- triad -->
  <path d="M186 632v13" stroke="#2f7a3a" stroke-width="2.2"/><path d="M183 644.5l3 5.5l3-5.5z" fill="#24602c"/>
  <text x="183.5" y="656" font-family="Liberation Sans" font-size="5" fill="#b8d8c0">Y</text>
  <path d="M186.5 632h-14" stroke="#3434c8" stroke-width="2.4"/><path d="M173.5 628.8l-5 3.2l5 3.2z" fill="#4040e0"/>
  <circle cx="181" cy="628" r="2.6" fill="#e02a20"/>
  <text x="176" y="626" font-family="Liberation Sans" font-size="5" fill="#f0a0a0">X</text>
  <text x="163.5" y="635" font-family="Liberation Sans" font-size="6" fill="#4848c0">Z</text>
  <!-- panel handle -->
  <rect x="159" y="362" width="5" height="24" fill="#f4f4f4" stroke="#ddd" stroke-width="0.5"/>
</svg>
<!-- BOTTOM TABS -->
<div id="btabs" class="a"></div>
<div class="a" style="left:0;top:670px;width:1278px;height:11px;background:#f3f3f3;border:1px solid #c8c8c8"></div>
<div class="a" style="left:0;top:670px;width:200px;height:11px;background:#d9d9da;border-top:1px solid #c8c8c8"></div>
<div class="a" style="left:1px;top:671px;width:45px;height:10px;background:#c4c4c5"></div>
<svg class="a" style="left:2px;top:671px" width="44" height="10"><g fill="none" stroke="#aaa" stroke-width="0.8"><path d="M4 2v6M9 2l-3 3l3 3"/><path d="M17 2l-3 3l3 3"/><path d="M25 2l3 3l-3 3"/><path d="M33 2l3 3l-3 3M39 2v6"/></g></svg>
<div class="a" style="left:46px;top:670px;width:37px;height:11px;background:#fff;font-size:8px;font-weight:bold;text-align:center;line-height:10px;color:#333">Model</div>
<div class="a" style="left:83px;top:671px;width:45px;height:10px;background:#dcdcdd;border-right:1px solid #bbb;font-size:8px;text-align:center;line-height:10px;color:#444">3D Views</div>
<div class="a" style="left:128px;top:671px;width:72px;height:10px;background:#dcdcdd;border-right:1px solid #bbb;font-size:8px;text-align:center;line-height:10px;color:#444">Motion Study 1</div>
<div id="status" class="a"></div>
<div class="a" style="left:2px;top:682px;font-size:7.6px;color:#333;line-height:10px">SOLIDWORKS Premium 2017 x64 Edition</div>
<div class="a" style="left:1140px;top:681px;width:1px;height:11px;background:#ddd"></div>
<div class="a" style="left:1150px;top:681px;width:1px;height:11px;background:#ddd"></div>
<div class="a" style="left:1160px;top:681px;width:1px;height:11px;background:#ddd"></div>
<div class="a" style="left:1181px;top:682px;font-size:8px;color:#c8c8c8;line-height:10px">MMGS</div>
<svg class="a" style="left:1216px;top:684px" width="6" height="6"><path d="M1 4l2-2l2 2z" fill="#aaa"/></svg>
<svg class="a" style="left:1264px;top:682px" width="14" height="10"><ellipse cx="7" cy="5" rx="5" ry="4" fill="#e8e8e8" stroke="#999"/></svg>
<div id="task" class="a"></div>
<svg class="a" style="left:0;top:692px" width="1280" height="28" viewBox="0 692 1280 28">
  <!-- start -->
  <g fill="#fff"><path d="M11 701.5l5-0.7v4.5h-5z"/><path d="M17 700.6l6-0.9v5.6h-6z"/><path d="M11 706.3h5v4.6l-5-0.7z"/><path d="M17 706.3h6v5.7l-6-0.9z"/></g>
  <!-- search -->
  <circle cx="51" cy="703.5" r="3.8" fill="none" stroke="#fff" stroke-width="1.3"/><path d="M48.3 706.3l-3.5 3.5" stroke="#fff" stroke-width="1.5"/>
  <!-- task view -->
  <g fill="none" stroke="#fff" stroke-width="1.1"><rect x="76" y="701" width="7" height="9"/><path d="M74 701v9M86 700v2M86 704v7"/></g>
  <!-- chrome -->
  <circle cx="115" cy="706" r="7.3" fill="#db4437"/>
  <path d="M115 706 L121.3 709.65 A7.3 7.3 0 0 1 108.7 709.65z" fill="#0f9d58"/>
  <path d="M115 706 L108.7 709.65 A7.3 7.3 0 0 1 108.7 702.35z" fill="#0f9d58"/>
  <path d="M115 706 L121.3 709.65 A7.3 7.3 0 0 0 121.3 702.35 z" fill="#f4b400"/>
  <path d="M115 706 L115 713.3 A7.3 7.3 0 0 0 121.3 709.65z" fill="#f4b400"/>
  <circle cx="115" cy="706" r="3.3" fill="#fff"/><circle cx="115" cy="706" r="2.5" fill="#4285f4"/>
  <rect x="101" y="718" width="28" height="2" fill="#9ac4f0"/>
  <!-- explorer -->
  <path d="M140 700h5l1 1.5h8v10h-14z" fill="#f3cd5a"/><rect x="140" y="703" width="14" height="8.5" fill="#fbe08a"/><rect x="144" y="707" width="6" height="3" fill="#3aa0dc"/>
  <!-- sublime -->
  <rect x="172.5" y="698.5" width="15" height="15" fill="#4a4a4a"/><path d="M176 704.5 l8 -3 v2.6 l-8 3z M176 707.1 l8 2.4 v0 l0 0z" fill="#f39c1a"/><path d="M176 704.5 v2.6 l8 2.6 v-2.6z" fill="#e08a12"/><path d="M176 710.3 l8 -3 v2.6 l-8 3z" fill="#f39c1a"/>
  <!-- store -->
  <path d="M205 701h14v12h-14z" fill="#fff"/><path d="M209 701q0-4 3-4q3 0 3 4" fill="none" stroke="#fff" stroke-width="1.2"/>
  <rect x="208.5" y="704" width="3" height="3" fill="#f25022"/><rect x="212.5" y="704" width="3" height="3" fill="#7fba00"/><rect x="208.5" y="708" width="3" height="3" fill="#00a4ef"/><rect x="212.5" y="708" width="3" height="3" fill="#ffb900"/>
  <!-- mail -->
  <path d="M237 703l8-4l8 4v8h-16z" fill="#fff"/><path d="M237 703l8 5l8-5" fill="none" stroke="#111" stroke-width="1"/><path d="M246 711l7-8" stroke="#111" stroke-width="1.2"/>
  <!-- sw active -->
  <rect x="261" y="692" width="33" height="28" fill="#3a3b3f"/>
  <path d="M269 700.5l7-3l7 3v9l-7 3.5l-7-3.5z" fill="#c8302a"/><path d="M269 700.5l7-3l7 3l-7 3z" fill="#e25a4c"/><path d="M276 703.5v9.5l7-3.5v-9z" fill="#a82822"/><text x="270.5" y="708.5" font-family="Liberation Sans" font-weight="bold" font-size="6" fill="#fff">S</text><text x="276.5" y="708.5" font-family="Liberation Sans" font-weight="bold" font-size="6" fill="#fff">W</text><rect x="273" y="710" width="9" height="3" fill="#555"/><text x="273.3" y="712.6" font-family="Liberation Sans" font-weight="bold" font-size="3.2" fill="#eee">2017</text>
  <rect x="261" y="718" width="33" height="2" fill="#9ac4f0"/>
  <!-- app icons -->
  <rect x="302" y="699.5" width="16" height="11" fill="#1f6fb8"/><rect x="303" y="700.5" width="14" height="9" fill="#2e8fd8"/><rect x="303" y="706" width="14" height="3.5" fill="#58d0f0"/><path d="M307 701.5l3 3l3-3M310 704.5v3" fill="none" stroke="#e8c030" stroke-width="1.5"/><rect x="308" y="710.5" width="4" height="1.5" fill="#aaa"/>
  <rect x="298" y="718" width="28" height="2" fill="#9ac4f0"/>
  <rect x="335" y="699.5" width="16" height="11" fill="#1f6fb8"/><rect x="336" y="700.5" width="14" height="9" fill="#2e8fd8"/><rect x="336" y="706" width="14" height="3.5" fill="#58d0f0"/><path d="M340 701.5l3 3l3-3M343 704.5v3" fill="none" stroke="#e8c030" stroke-width="1.5"/><rect x="341" y="710.5" width="4" height="1.5" fill="#aaa"/>
  <rect x="330" y="718" width="28" height="2" fill="#9ac4f0"/>
  <!-- tray -->
  <g fill="none" stroke="#ddd" stroke-width="1"><circle cx="1098" cy="703" r="1.8"/><path d="M1094 710q0-4 4-4q2 0 3 1.5"/><circle cx="1101" cy="702" r="1.8"/><path d="M1098 709q1-3 3.5-3q3.5 0 3.5 4"/></g>
  <path d="M1116 708l4-4l4 4" fill="none" stroke="#fff" stroke-width="1.2"/>
  <path d="M1131 709h10q2 0 2-2q0-2.5-2.5-2.5q-1-3-4-3q-3 0-4 3q-2.5 0-2.5 2.5q0 2 1 2z" fill="#fff"/>
  <path d="M1148 710q0-8 8-8v8z" fill="#666"/><path d="M1152 710q0-4 4-4v4z" fill="#ccc"/>
  <path d="M1163 704h2l3-3v10l-3-3h-2z" fill="none" stroke="#ddd"/><path d="M1170 703q2 3 0 6M1172 702q3 4 0 8" fill="none" stroke="#ddd"/>
  <text x="1181" y="709" font-family="Liberation Sans" font-size="8" fill="#eee">TUR</text>
  <text x="1221" y="703.5" text-anchor="middle" font-family="Liberation Sans" font-size="7.5" fill="#eee">22:47</text>
  <text x="1221.5" y="714" text-anchor="middle" font-family="Liberation Sans" font-size="7.5" fill="#eee">13-Sep-18</text>
  <path d="M1251 701h11v8h-5l-2 2.5v-2.5h-4z" fill="none" stroke="#eee" stroke-width="1"/>
</svg>
<div class="a" style="left:1278px;top:80px;width:2px;height:640px;background:#fff"></div>
<div class="a" style="left:0;top:719px;width:1280px;height:1px;background:#d8d8d8"></div>
<div class="a" style="left:0;top:79px;width:1px;height:641px;background:#eeeeee"></div>
</body></html>
